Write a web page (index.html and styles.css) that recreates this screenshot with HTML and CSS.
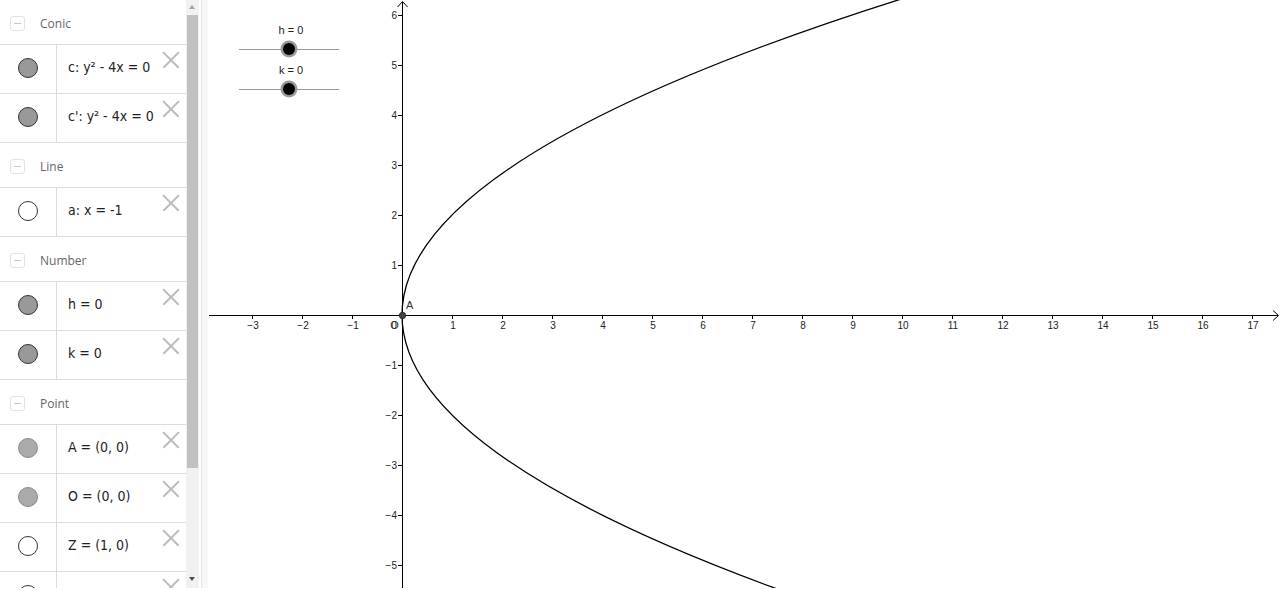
FILE: index.html
```html
<!DOCTYPE html>
<html>
<head>
<meta charset="utf-8">
<link rel="stylesheet" href="styles.css">
</head>
<body>
<div class="app">
  <div class="panel">
    <div class="header"><span class="collapse"></span><span class="htext">Conic</span></div>
    <div class="row"><div class="mcell"><span class="marble dark"></span></div><div class="expr">c: y² - 4x = 0</div><span class="del"></span></div>
    <div class="row"><div class="mcell"><span class="marble dark"></span></div><div class="expr">c': y² - 4x = 0</div><span class="del"></span></div>
    <div class="header"><span class="collapse"></span><span class="htext">Line</span></div>
    <div class="row"><div class="mcell"><span class="marble empty"></span></div><div class="expr">a: x = -1</div><span class="del"></span></div>
    <div class="header"><span class="collapse"></span><span class="htext">Number</span></div>
    <div class="row"><div class="mcell"><span class="marble dark"></span></div><div class="expr">h = 0</div><span class="del"></span></div>
    <div class="row"><div class="mcell"><span class="marble dark"></span></div><div class="expr">k = 0</div><span class="del"></span></div>
    <div class="header"><span class="collapse"></span><span class="htext">Point</span></div>
    <div class="row"><div class="mcell"><span class="marble light"></span></div><div class="expr">A = (0, 0)</div><span class="del"></span></div>
    <div class="row"><div class="mcell"><span class="marble light"></span></div><div class="expr">O = (0, 0)</div><span class="del"></span></div>
    <div class="row"><div class="mcell"><span class="marble empty"></span></div><div class="expr">Z = (1, 0)</div><span class="del"></span></div>
    <div class="row"><div class="mcell"><span class="marble empty"></span></div><div class="expr"></div><span class="del"></span></div>
  </div>
  <div class="scrollbar">
    <span class="arrow up"></span>
    <div class="thumb"></div>
    <span class="arrow down"></span>
  </div>
  <div class="divider"></div>
  <svg class="graph" width="1073" height="588" viewBox="207 0 1073 588" xmlns="http://www.w3.org/2000/svg">
    <g class="axes" stroke="#000" stroke-width="1" fill="none">
      <line x1="208" y1="315.5" x2="1277" y2="315.5"/>
      <polyline points="1272,310.5 1277.5,315.5 1272,320.5"/>
      <line x1="401.5" y1="2" x2="401.5" y2="588"/>
      <polyline points="396.5,7 401.5,1.5 406.5,7"/>
      <path d="M251.5 315v4M301.5 315v4M351.5 315v4M451.5 315v4M501.5 315v4M551.5 315v4M601.5 315v4M651.5 315v4M701.5 315v4M751.5 315v4M801.5 315v4M851.5 315v4M901.5 315v4M951.5 315v4M1001.5 315v4M1051.5 315v4M1101.5 315v4M1151.5 315v4M1201.5 315v4M1251.5 315v4"/>
      <path d="M397 15.5h4M397 65.5h4M397 115.5h4M397 165.5h4M397 215.5h4M397 265.5h4M397 365.5h4M397 415.5h4M397 465.5h4M397 515.5h4M397 565.5h4"/>
    </g>
    <g class="xlabels" text-anchor="middle">
      <text x="252" y="329">−3</text>
      <text x="302" y="329">−2</text>
      <text x="352" y="329">−1</text>
      <text x="393" y="329">0</text>
      <text x="393.5" y="329" class="olabel">O</text>
      <text x="452" y="329">1</text>
      <text x="502" y="329">2</text>
      <text x="552" y="329">3</text>
      <text x="602" y="329">4</text>
      <text x="652" y="329">5</text>
      <text x="702" y="329">6</text>
      <text x="752" y="329">7</text>
      <text x="802" y="329">8</text>
      <text x="852" y="329">9</text>
      <text x="902" y="329">10</text>
      <text x="952" y="329">11</text>
      <text x="1002" y="329">12</text>
      <text x="1052" y="329">13</text>
      <text x="1102" y="329">14</text>
      <text x="1152" y="329">15</text>
      <text x="1202" y="329">16</text>
      <text x="1252" y="329">17</text>
    </g>
    <g class="ylabels" text-anchor="end">
      <text x="396" y="19">6</text>
      <text x="396" y="69">5</text>
      <text x="396" y="119">4</text>
      <text x="396" y="169">3</text>
      <text x="396" y="219">2</text>
      <text x="396" y="269">1</text>
      <text x="396" y="369">−1</text>
      <text x="396" y="419">−2</text>
      <text x="396" y="469">−3</text>
      <text x="396" y="519">−4</text>
      <text x="396" y="569">−5</text>
    </g>
    <path d="M793 595 Q-47 295 913 -5" fill="none" stroke="#000" stroke-width="1.3"/>
    <circle cx="401.5" cy="315.5" r="3.2" fill="#444" stroke="#222" stroke-width="0.8"/>
    <text class="plabel" x="405" y="309">A</text>
    <g class="slider">
      <line x1="238" y1="49.5" x2="338" y2="49.5" stroke="#999" stroke-width="1"/>
      <circle cx="288" cy="49" r="8.5" fill="#999"/>
      <circle cx="288" cy="49" r="6" fill="#000"/>
      <text class="slabel" x="290" y="34" text-anchor="middle">h = 0</text>
      <line x1="238" y1="89.5" x2="338" y2="89.5" stroke="#999" stroke-width="1"/>
      <circle cx="288" cy="89" r="8.5" fill="#999"/>
      <circle cx="288" cy="89" r="6" fill="#000"/>
      <text class="slabel" x="290" y="74" text-anchor="middle">k = 0</text>
    </g>
  </svg>
</div>
</body>
</html>
```

FILE: styles.css
```css
html, body {
  margin: 0;
  padding: 0;
  background: #fff;
}

.app {
  display: flex;
  height: 588px;
  width: 1280px;
  overflow: hidden;
}

.panel {
  width: 186px;
  flex: none;
  height: 588px;
  overflow: hidden;
  display: flex;
  flex-direction: column;
}

.header {
  flex: none;
  border-bottom: 1px solid #dcdcdc;
  display: flex;
  align-items: center;
  box-sizing: border-box;
  height: 45px;
  padding-top: 3px;
}

.header:first-child {
  padding-top: 2px;
}

.collapse {
  width: 15px;
  height: 15px;
  margin-left: 10px;
  border: 1px solid #e3e3e3;
  border-radius: 3px;
  position: relative;
  box-sizing: border-box;
}

.collapse::after {
  content: "";
  position: absolute;
  left: 3px;
  right: 3px;
  top: 6px;
  height: 1px;
  background: #c8c8c8;
}

.htext {
  margin-left: 15px;
  font-family: "Open Sans", "Noto Sans", sans-serif;
  font-size: 12px;
  color: #666;
}

.row {
  flex: none;
  height: 49px;
  box-sizing: border-box;
  border-bottom: 1px solid #dcdcdc;
  display: flex;
  align-items: stretch;
  position: relative;
}

.mcell {
  width: 57px;
  border-right: 1px solid #dcdcdc;
  display: flex;
  align-items: center;
  justify-content: center;
  box-sizing: border-box;
  flex: none;
  padding-bottom: 3px;
}

.marble {
  width: 20px;
  height: 20px;
  border-radius: 50%;
  box-sizing: border-box;
}

.marble.dark {
  background: #999;
  border: 1px solid #333;
}

.marble.light {
  background: #aaa;
  border: 1px solid #888;
}

.marble.empty {
  background: #fff;
  border: 1px solid #333;
}

.expr {
  display: flex;
  align-items: center;
  padding-left: 11px;
  padding-bottom: 4px;
  font-family: "DejaVu Sans Condensed", "DejaVu Sans", sans-serif;
  font-stretch: condensed;
  font-size: 14px;
  color: #222;
}

.del {
  position: absolute;
  right: 7px;
  top: 7px;
  width: 16px;
  height: 16px;
}

.del::before,
.del::after {
  content: "";
  position: absolute;
  left: -3px;
  top: 7px;
  width: 22px;
  height: 1.5px;
  background: #bbb;
  transform: rotate(45deg);
}

.del::after {
  transform: rotate(-45deg);
}

.scrollbar {
  width: 13px;
  flex: none;
  background: #f1f1f1;
  position: relative;
  border-right: 2px solid #fff;
}

.thumb {
  position: absolute;
  left: 1px;
  right: 1px;
  top: 15px;
  height: 453px;
  background: #c1c1c1;
}

.arrow {
  position: absolute;
  left: 3px;
  width: 0;
  height: 0;
  border-left: 3.5px solid transparent;
  border-right: 3.5px solid transparent;
}

.arrow.up {
  top: 5px;
  border-bottom: 4px solid #a3a3a3;
}

.arrow.down {
  top: 577px;
  border-top: 4px solid #505050;
}

.divider {
  width: 6px;
  flex: none;
  border-left: 1px solid #e4e4e4;
  background: #f7f7f7;
}

.graph {
  flex: none;
  display: block;
}

.xlabels text,
.ylabels text {
  font-family: "Liberation Sans", Arial, sans-serif;
  font-size: 10px;
  fill: #222;
}

.xlabels .olabel {
  font-size: 11px;
  fill: #333;
}

.plabel {
  font-family: "Liberation Sans", Arial, sans-serif;
  font-size: 11px;
  fill: #333;
}

.slabel {
  font-family: "Liberation Sans", Arial, sans-serif;
  font-size: 11px;
  fill: #222;
}
```
